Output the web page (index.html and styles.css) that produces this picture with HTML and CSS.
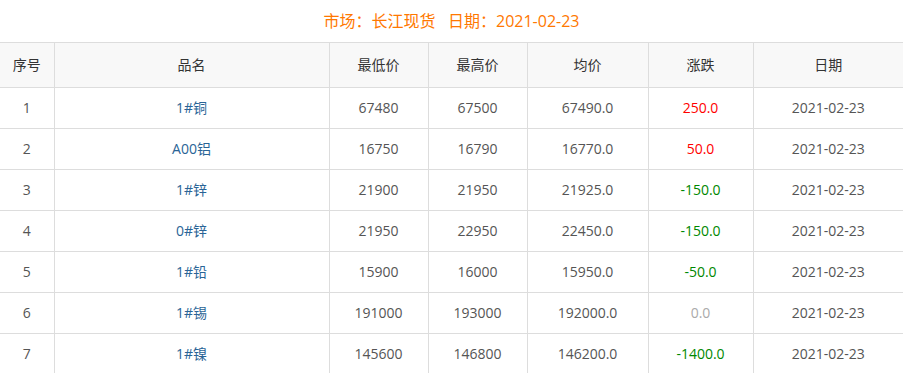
FILE: index.html
```html
<!DOCTYPE html>
<html lang="zh-CN">
<head>
<meta charset="utf-8">
<title>长江现货</title>
<link rel="stylesheet" href="styles.css">
</head>
<body>
<div class="title">市场：长江现货&nbsp;&nbsp;&nbsp;日期：2021-02-23</div>
<table class="price-table">
  <colgroup>
    <col class="c1"><col class="c2"><col class="c3"><col class="c4"><col class="c5"><col class="c6"><col class="c7">
  </colgroup>
  <thead>
    <tr><th>序号</th><th>品名</th><th>最低价</th><th>最高价</th><th>均价</th><th>涨跌</th><th>日期</th></tr>
  </thead>
  <tbody>
    <tr><td>1</td><td class="name">1#铜</td><td>67480</td><td>67500</td><td>67490.0</td><td class="up">250.0</td><td>2021-02-23</td></tr>
    <tr><td>2</td><td class="name">A00铝</td><td>16750</td><td>16790</td><td>16770.0</td><td class="up">50.0</td><td>2021-02-23</td></tr>
    <tr><td>3</td><td class="name">1#锌</td><td>21900</td><td>21950</td><td>21925.0</td><td class="down">-150.0</td><td>2021-02-23</td></tr>
    <tr><td>4</td><td class="name">0#锌</td><td>21950</td><td>22950</td><td>22450.0</td><td class="down">-150.0</td><td>2021-02-23</td></tr>
    <tr><td>5</td><td class="name">1#铅</td><td>15900</td><td>16000</td><td>15950.0</td><td class="down">-50.0</td><td>2021-02-23</td></tr>
    <tr><td>6</td><td class="name">1#锡</td><td>191000</td><td>193000</td><td>192000.0</td><td class="flat">0.0</td><td>2021-02-23</td></tr>
    <tr><td>7</td><td class="name">1#镍</td><td>145600</td><td>146800</td><td>146200.0</td><td class="down">-1400.0</td><td>2021-02-23</td></tr>
  </tbody>
</table>
</body>
</html>
```
FILE: styles.css
```css
html, body {
  margin: 0;
  padding: 0;
  background: #fff;
}
body {
  font-family: "Open Sans", "Noto Sans CJK SC", sans-serif;
  color: #555;
  font-size: 14px;
}
.title {
  height: 42px;
  line-height: 42px;
  text-align: center;
  color: #ff7800;
  font-size: 16px;
}
.price-table {
  width: 903px;
  border-collapse: collapse;
  table-layout: fixed;
}
.c1 { width: 54px; }
.c2 { width: 275px; }
.c3 { width: 99px; }
.c4 { width: 99px; }
.c5 { width: 121px; }
.c6 { width: 105px; }
.c7 { width: 150px; }
.price-table th,
.price-table td {
  border: 1px solid #ddd;
  text-align: center;
  padding: 0;
  font-weight: normal;
  line-height: 20px;
}
.price-table tr > :first-child { border-left: none; }
.price-table tr > :last-child { border-right: none; }
.price-table th {
  height: 44px;
  background: #f8f8f8;
  color: #333;
}
.price-table td {
  height: 40px;
}
.price-table td.name { color: #2a6496; }
.price-table td.up { color: #f00; }
.price-table td.down { color: #080; }
.price-table td.flat { color: #aaa; }
```
